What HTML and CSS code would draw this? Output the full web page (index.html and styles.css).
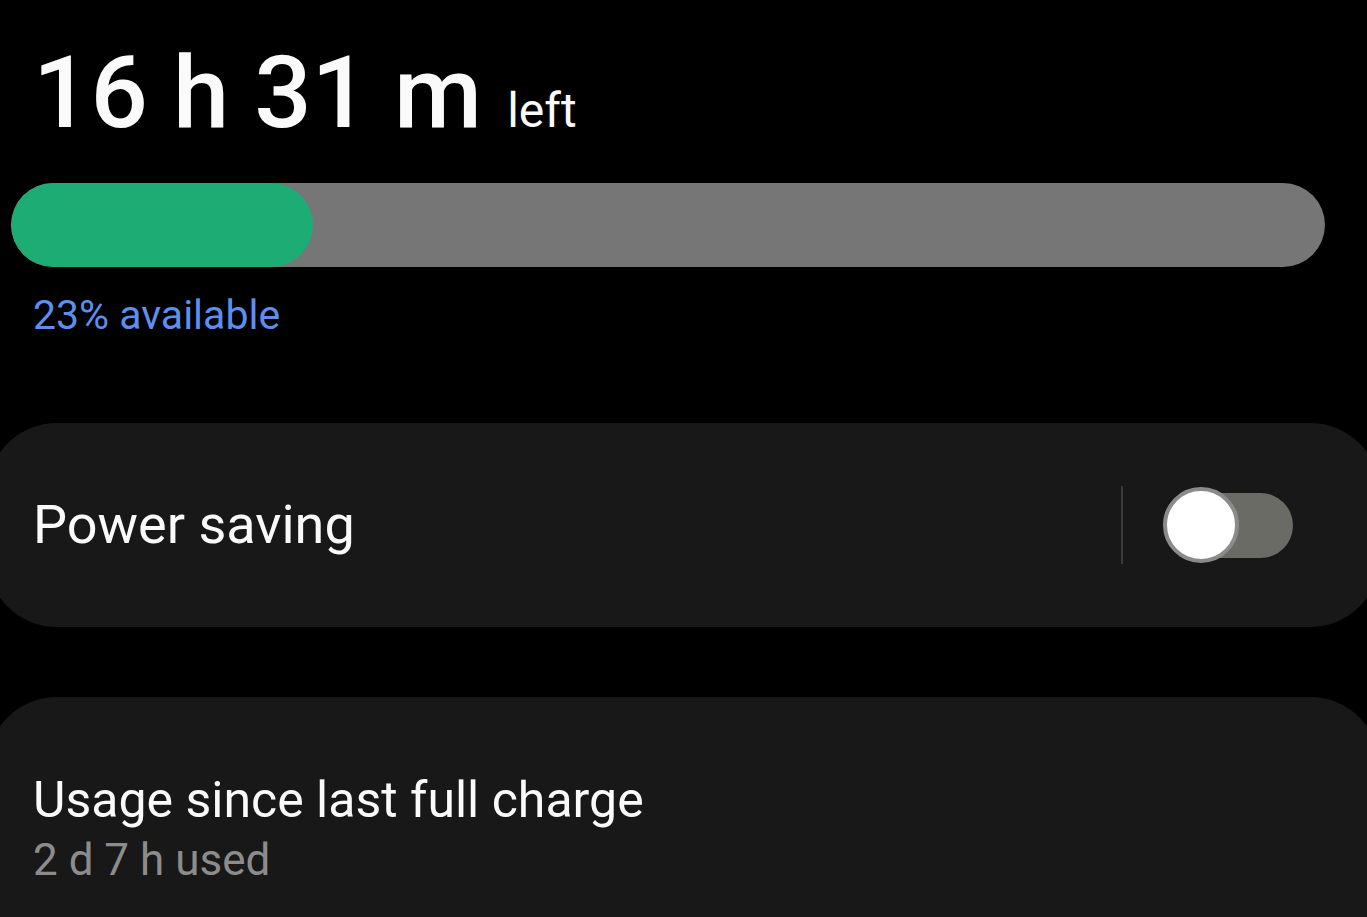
FILE: index.html
```html
<!DOCTYPE html>
<html lang="en">
<head>
  <meta charset="UTF-8" />
  <meta name="viewport" content="width=device-width, initial-scale=1" />
  <title>Battery</title>
  <link rel="stylesheet" href="styles.css">
</head>
<body>
  <div class="battery">
    <div class="remaining">16 h 31 m <span class="left">left</span></div>

    <div class="level-bar">
      <div class="level-fill" style="width: 23%;"></div>
    </div>
    <div class="available">23% available</div>
  </div>

  <div class="card card-switch">
    <div class="card-title">Power saving</div>
    <div class="switch-wrap">
      <div class="divider"></div>
      <div class="switch">
        <div class="thumb"></div>
      </div>
    </div>
  </div>

  <div class="card card-usage">
    <div class="card-title">Usage since last full charge</div>
    <div class="card-sub">2 d 7 h used</div>
  </div>
</body>
</html>
```

FILE: styles.css
```css
html, body {
  margin: 0;
  background: #000;
  overflow: hidden;
}
body {
  font-family: Roboto, 'Noto Sans', sans-serif;
  color: #fafafa;
  height: 917px;
}

.battery {
  padding: 0 42px 0 11px;
}
.remaining {
  font-size: 101px;
  line-height: 1;
  font-weight: 500;
  margin: 42px 0 0 22px;
}
.remaining .left {
  font-size: 48px;
  font-weight: 400;
}

.level-bar {
  margin-top: 40px;
  height: 84px;
  border-radius: 42px;
  background: #767676;
  overflow: hidden;
}
.level-fill {
  height: 100%;
  background: #1dac74;
  border-radius: 42px;
}
.available {
  margin: 28px 0 0 22px;
  font-size: 41px;
  line-height: 1;
  color: #5d8ff0;
}

/* Cards */
.card {
  margin: 0 -13px;
  background: #181818;
  border-radius: 70px;
  padding: 0 87px 0 46px;
}
.card-title {
  font-size: 54px;
  line-height: 1;
}
.card-switch {
  margin-top: 87px;
  height: 204px;
  display: flex;
  align-items: center;
  justify-content: space-between;
}
.switch-wrap {
  display: flex;
  align-items: center;
  gap: 42px;
}
.divider {
  width: 2px;
  height: 78px;
  background: #3b3b3b;
}
.switch {
  position: relative;
  width: 128px;
  height: 65px;
  border-radius: 33px;
  background: #6b6b66;
}
.thumb {
  position: absolute;
  left: -2px;
  top: 50%;
  width: 68px;
  height: 68px;
  margin-top: -38px;
  border-radius: 50%;
  background: #fff;
  border: 4px solid #8b8b8b;
}

.card-usage {
  margin-top: 70px;
  height: 260px;
  padding-top: 78px;
  box-sizing: border-box;
}
.card-usage .card-title {
  font-size: 50px;
  line-height: 1;
}
.card-sub {
  margin-top: 13px;
  font-size: 44px;
  line-height: 1;
  color: #8c8c8c;
}
```
